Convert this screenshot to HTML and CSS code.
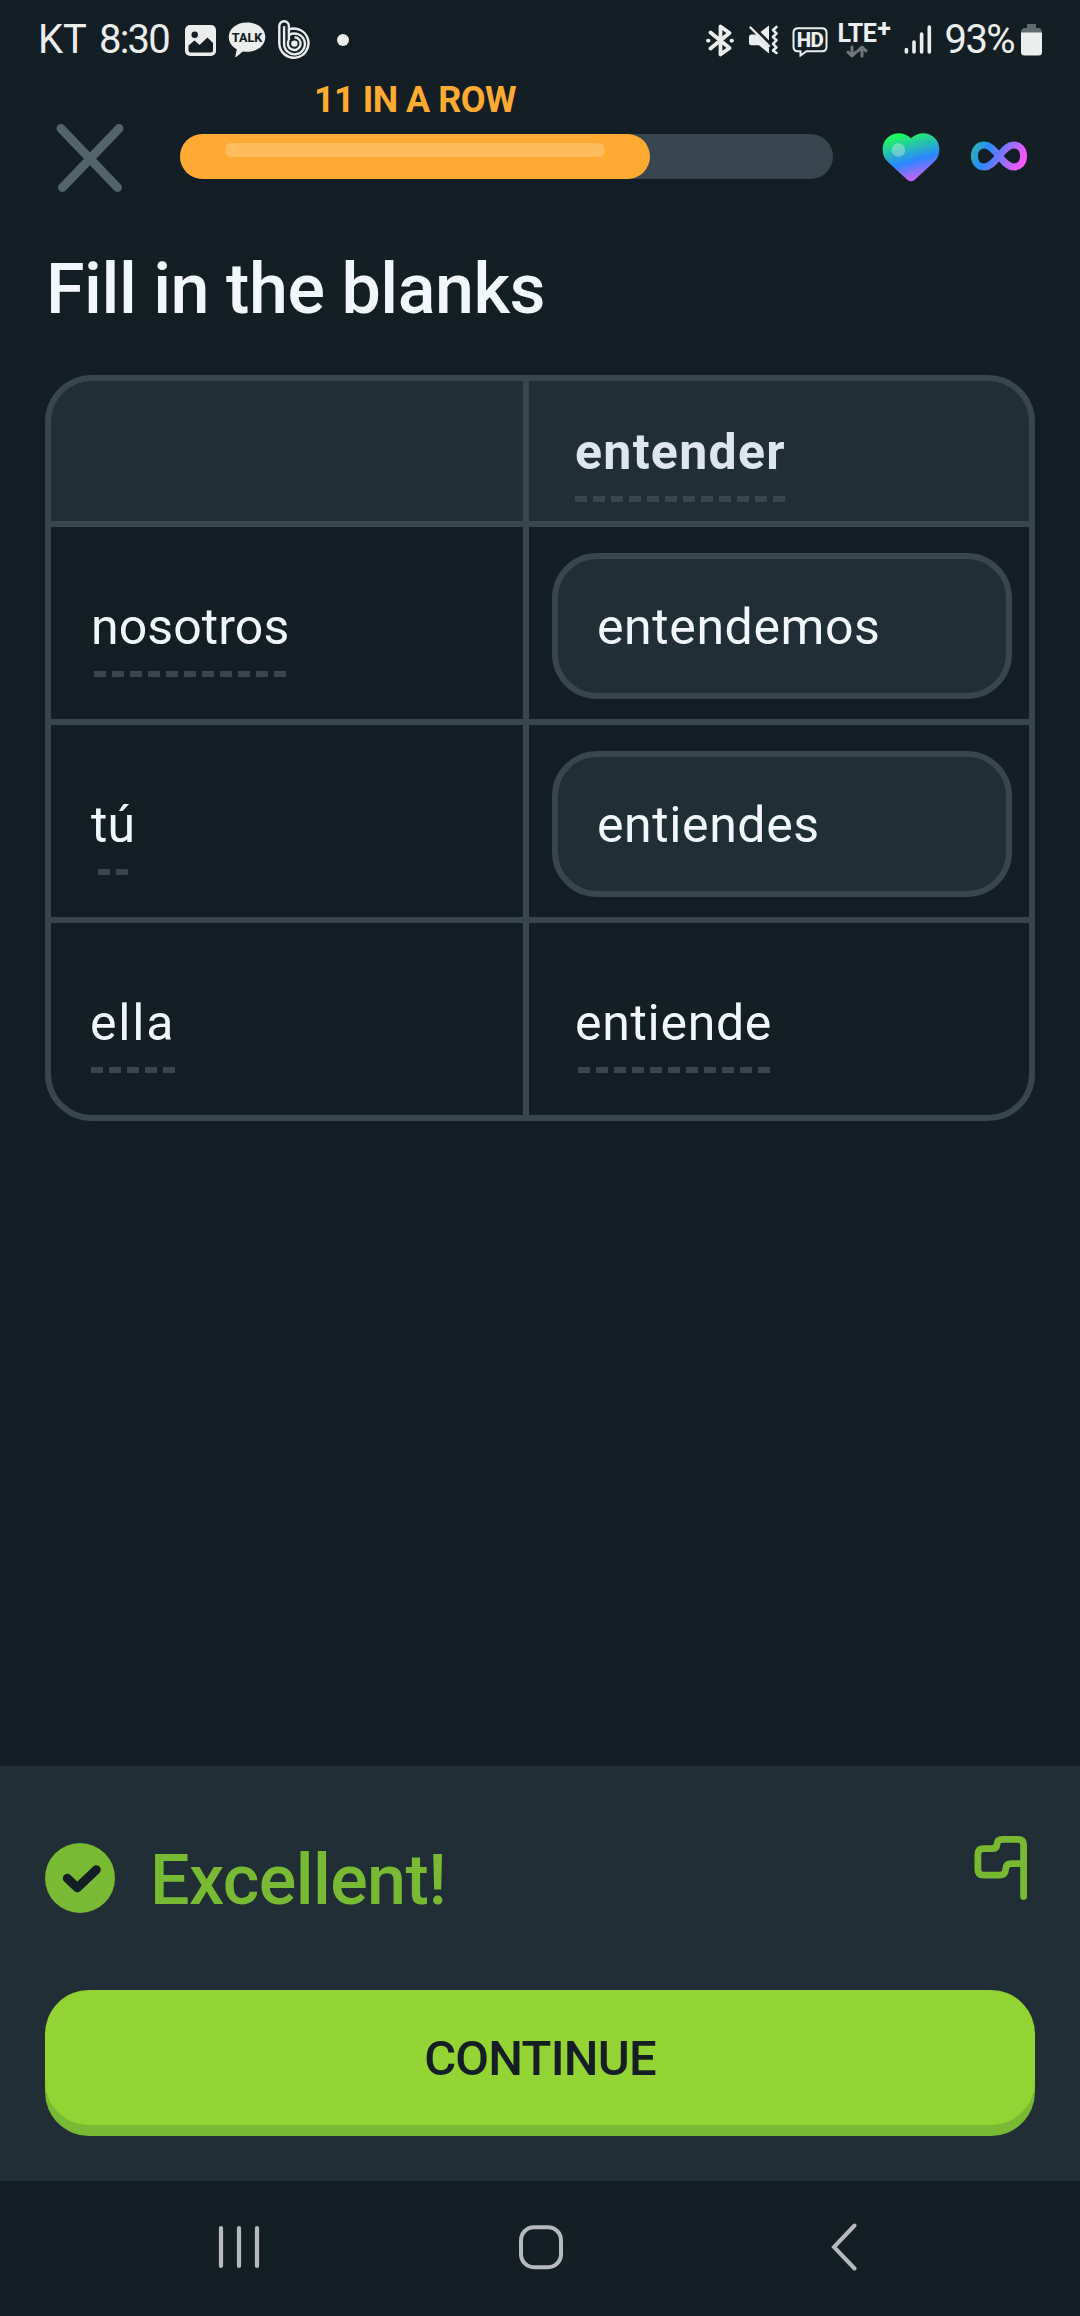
FILE: index.html
```html
<!DOCTYPE html>
<html lang="es">
<head>
    <meta charset="UTF-8">
    <meta name="viewport" content="width=device-width, initial-scale=1.0">
    <title>Fill in the blanks</title>
    <link rel="stylesheet" href="styles.css">
</head>
<body>
    <div class="status-bar">
        <div class="status-left">
            <span class="carrier">KT</span>
            <span class="clock">8:30</span>
            <svg class="icon-image" width="31" height="31" viewBox="0 0 31 31">
                <rect width="31" height="31" rx="5" fill="#eceeed"/>
                <circle cx="9.7" cy="9.7" r="3.2" fill="#131f24"/>
                <path d="M3.5 20.5 L9.5 15.5 L14.5 20 L22.5 12.5 L28 18 V25.5 Q28 27.5 26 27.5 H5.5 Q3.5 27.5 3.5 25.5 Z" fill="#131f24"/>
            </svg>
            <svg class="icon-talk" width="38" height="36" viewBox="0 0 38 36">
                <path d="M19 .5 C29.5 .5 37.3 6.8 37.3 15 C37.3 23.4 29.5 29.8 19 29.8 C17.5 29.8 16 29.7 14.8 29.4 L8.2 35 C7.5 35.3 7.2 35 7.4 34.3 L8.8 27.3 C3.8 24.7 .8 20.2 .8 15 C.8 6.8 8.5 .5 19 .5 Z" fill="#eceeed"/>
                <text x="19" y="20" class="talk-text">TALK</text>
            </svg>
            <svg class="icon-b" width="32" height="40" viewBox="0 0 32 40" fill="none" stroke="#eceeed" stroke-width="2.4">
                <path d="M1.3 23.5 V6 A4.8 4.8 0 0 1 10.9 6 V9.4 A14.6 14.6 0 1 1 1.3 23.5 Z"/>
                <path d="M6.1 24 V6.2 M6.1 23.5 A10.4 10.4 0 1 0 11.5 14.8"/>
                <path d="M10.9 10 V20 M10.9 20 A6.4 6.4 0 1 0 16.5 17.2" />
                <circle cx="16.4" cy="23.6" r="3.2" fill="#eceeed" stroke="none"/>
            </svg>
            <span class="more-dot"></span>
        </div>
        <div class="status-right">
            <svg width="28" height="33" viewBox="0 0 28 33" fill="none" stroke="#eceeed" stroke-width="3.8" stroke-linecap="round" stroke-linejoin="round">
                <path d="M4.5 8.5 L23.5 24 L14.5 30.5 V2.5 L23.5 9 L4.5 24.5"/>
                <path d="M2 16.6 H2.6 M25.4 16.6 H26"/>
            </svg>
            <svg class="icon-mute" width="32" height="30" viewBox="0 0 32 30">
                <path d="M1 12 Q1 9.5 3.5 9.5 H8.2 L21 22.5 V28.5 L11 20.3 H3.5 Q1 20.3 1 17.8 Z" fill="#eceeed"/>
                <path d="M12.5 7 L21 .5 V15.5 Z" fill="#eceeed"/>
                <path d="M2.5 2.5 L21 21" stroke="#eceeed" stroke-width="2.4" stroke-linecap="round"/>
                <path d="M28.5 2 L25 5 L28.5 8.5 L25 12 L28.5 15.3 L25 18.8 L28.5 22.3 L25 25.5 L28.5 28" fill="none" stroke="#eceeed" stroke-width="2.6" stroke-linecap="round" stroke-linejoin="round"/>
            </svg>
            <svg class="icon-hd" width="36" height="30" viewBox="0 0 36 30">
                <path d="M6 1.3 H30 Q34.5 1.3 34.5 5.8 V19.7 Q34.5 24.2 30 24.2 H14.5 L8.5 28.5 V24.2 H6 Q1.5 24.2 1.5 19.7 V5.8 Q1.5 1.3 6 1.3 Z" fill="none" stroke="#eceeed" stroke-width="2"/>
                <text x="18" y="20.2" class="hd-text">HD</text>
            </svg>
            <div class="network">
                <span class="network-name">LTE<sup>+</sup></span>
                <svg width="22" height="13" viewBox="0 0 22 13" fill="none" stroke="#70787b" stroke-width="3" stroke-linecap="round" stroke-linejoin="round">
                    <path d="M6 2 V10.5 M2 7.2 L6 11 L10 7.2"/>
                    <path d="M16 11 V2.5 M12 5.8 L16 2 L20 5.8"/>
                </svg>
            </div>
            <svg class="icon-signal" width="28" height="30" viewBox="0 0 28 30" stroke="#eceeed" stroke-width="3.6" stroke-linecap="round">
                <path d="M2.4 24.5 V27 M10 17 V27 M17.6 9 V27 M25.3 2 V27"/>
            </svg>
            <span class="battery-text">93%</span>
            <svg class="icon-battery" width="21" height="32" viewBox="0 0 21 32">
                <path d="M6 0 H15 V4 H17 Q21 4 21 9 H0 Q0 4 4 4 H6 Z" fill="#626b6e"/>
                <path d="M0 8.5 H21 V28 Q21 31.5 17.5 31.5 H3.5 Q0 31.5 0 28 Z" fill="#eceeed"/>
            </svg>
        </div>
    </div>

    <div class="lesson-header">
        <svg class="close" width="68" height="68" viewBox="0 0 68 68" stroke="#52656d" stroke-width="9" stroke-linecap="round">
            <path d="M5 4.5 L61.5 63.5 M63 4.5 L6.5 63.5"/>
        </svg>
        <div class="progress-area">
            <div class="streak">11 IN A ROW</div>
            <div class="progress">
                <div class="progress-fill"><div class="progress-shine"></div></div>
            </div>
        </div>
        <svg class="heart" width="58" height="49" viewBox="0 0 58 49">
            <defs>
                <linearGradient id="heartFill" gradientUnits="userSpaceOnUse" x1="18" y1="2" x2="31" y2="50">
                    <stop offset="0" stop-color="#20fa60"/>
                    <stop offset="0.57" stop-color="#2b86ff"/>
                    <stop offset="1" stop-color="#de5cf8"/>
                </linearGradient>
            </defs>
            <path d="M29 5.3 C25 1.8 21 .3 17 .3 C7.5 .3 .6 7.5 .6 16.5 C.6 21.5 2.6 26 6 29 L25.5 47 Q29 49.5 32.5 47 L52 29 C55.4 26 57.4 21.5 57.4 16.5 C57.4 7.5 50.5 .3 41 .3 C37 .3 33 1.8 29 5.3 Z" fill="url(#heartFill)"/>
            <circle cx="16.4" cy="17" r="6.8" fill="#fff" fill-opacity="0.3"/>
        </svg>
        <svg class="infinity" width="56" height="30" viewBox="0 0 56 30">
            <defs>
                <linearGradient id="infinityFill" gradientUnits="userSpaceOnUse" x1="2" y1="2" x2="52" y2="24">
                    <stop offset="0" stop-color="#2bb8a8"/>
                    <stop offset="0.3" stop-color="#2b88ff"/>
                    <stop offset="1" stop-color="#ff55ff"/>
                </linearGradient>
            </defs>
            <path d="M28 15 C21.5 7 18 4 13.3 4 C7.3 4 3.5 8.4 3.5 15 S7.3 26 13.3 26 C18 26 21.5 23 28 15 C34.5 7 38 4 42.7 4 C48.7 4 52.5 8.4 52.5 15 S48.7 26 42.7 26 C38 26 34.5 23 28 15 Z" fill="none" stroke="url(#infinityFill)" stroke-width="7"/>
        </svg>
    </div>

    <div class="challenge">
        <h1>Fill in the blanks</h1>
        <div class="verb-table">
            <div class="cell head"></div>
            <div class="cell head">
                <div class="word bold">entender<span class="dashes" style="--count: 12"></span></div>
            </div>
            <div class="cell">
                <div class="word snug">nosotros<span class="dashes" style="--count: 11"></span></div>
            </div>
            <div class="cell blank"><div class="answer">entendemos</div></div>
            <div class="cell">
                <div class="word snug">tú<span class="dashes" style="--count: 2"></span></div>
            </div>
            <div class="cell blank"><div class="answer">entiendes</div></div>
            <div class="cell">
                <div class="word wide">ella<span class="dashes" style="--count: 5"></span></div>
            </div>
            <div class="cell">
                <div class="word">entiende<span class="dashes" style="--count: 11"></span></div>
            </div>
        </div>
    </div>

    <div class="feedback">
        <div class="feedback-row">
            <svg width="70" height="70" viewBox="0 0 70 70">
                <circle cx="35" cy="35" r="35" fill="#79b933"/>
                <path d="M22.3 35.3 L32.3 44.7 L51.3 26.7" fill="none" stroke="#131f24" stroke-width="9" stroke-linecap="round" stroke-linejoin="round"/>
            </svg>
            <span class="feedback-text">Excellent!</span>
            <svg class="flag" width="54" height="64" viewBox="0 0 54 64" fill="none" stroke="#79b933" stroke-width="6.8" stroke-linecap="round">
                <path d="M49.6 60.5 V9 Q49.6 3.4 44 3.4 H28.5 Q23.2 3.4 23 8 Q22.8 12.7 18 12.7 H9.5 Q3.9 12.7 3.9 18.3 V33.5 Q3.9 39.1 9.5 39.1 H26 Q31.4 39.1 31.6 33.5 Q31.8 27.6 37.5 27.6 H49"/>
            </svg>
        </div>
        <button class="continue">CONTINUE</button>
    </div>

    <div class="nav-bar">
        <svg width="42" height="46" viewBox="0 0 42 46" stroke="#b7babc" stroke-width="4.2" stroke-linecap="round">
            <path d="M3 4 V42 M21 4 V42 M39 4 V42"/>
        </svg>
        <svg class="home" width="46" height="46" viewBox="0 0 46 46">
            <rect x="3" y="3.2" width="40" height="40" rx="13" fill="none" stroke="#b7babc" stroke-width="4"/>
        </svg>
        <svg width="28" height="48" viewBox="0 0 28 48" fill="none" stroke="#b7babc" stroke-width="4" stroke-linecap="round">
            <path d="M24.5 2.5 L4 24 L24.5 45.5"/>
        </svg>
    </div>
</body>
</html>
```
FILE: styles.css
```css
* {
    box-sizing: border-box;
}

body {
    margin: 0;
    width: 1080px;
    height: 2316px;
    display: flex;
    flex-direction: column;
    background-color: #131f24;
    color: #f1f7fb;
    font-family: Roboto, "Liberation Sans", sans-serif;
}

svg {
    display: block;
    flex: none;
}

/* Status bar */
.status-bar {
    height: 80px;
    display: flex;
    justify-content: space-between;
    padding: 0 38px;
    color: #eceeed;
    font-size: 40px;
    line-height: 82px;
}

.status-left,
.status-right {
    display: flex;
    align-items: center;
}

.carrier {
    width: 61px;
}

.clock {
    width: 86px;
    letter-spacing: -1.8px;
}

.icon-talk {
    margin-left: 12px;
}

.icon-b {
    margin-left: 12px;
}

.more-dot {
    width: 12px;
    height: 12px;
    margin-left: 27px;
    border-radius: 50%;
    background-color: #eceeed;
}

.talk-text {
    font-size: 12.5px;
    font-weight: 800;
    text-anchor: middle;
    fill: #131f24;
}

.hd-text {
    font-size: 20.5px;
    font-weight: 800;
    letter-spacing: -0.5px;
    text-anchor: middle;
    fill: #eceeed;
}

.icon-mute {
    margin-left: 14px;
}

.icon-hd {
    margin: 3px 0 0 12px;
}

.network {
    width: 56px;
    height: 36px;
    margin-left: 10px;
}

.network-name {
    display: flex;
    height: 23px;
    font-size: 25px;
    font-weight: 700;
    line-height: 23px;
    letter-spacing: -0.5px;
}

.network-name sup {
    margin-left: 1px;
    font-size: 25px;
    line-height: 14px;
}

.network svg {
    margin-left: 8px;
}

.icon-signal {
    margin-left: 10px;
}

.battery-text {
    margin-left: 13px;
    letter-spacing: -1.6px;
}

.icon-battery {
    margin-left: 7px;
}

/* Lesson header */
.lesson-header {
    height: 169px;
    display: flex;
    align-items: flex-start;
    padding-left: 56px;
}

.close {
    margin-top: 44px;
}

.progress-area {
    width: 653px;
    margin-left: 56px;
}

.streak {
    width: 470px;
    height: 54px;
    color: #ffab33;
    font-size: 36px;
    font-weight: 700;
    line-height: 40px;
    letter-spacing: -0.5px;
    text-align: center;
}

.progress {
    height: 45px;
    border-radius: 23px;
    background-color: #37464f;
}

.progress-fill {
    width: 470px;
    height: 45px;
    padding: 9px 45px;
    border-radius: 23px;
    background-color: #ffab33;
}

.progress-shine {
    height: 14px;
    border-radius: 7px;
    background-color: #ffbc5c;
}

.heart {
    margin: 53px 0 0 49px;
}

.infinity {
    margin: 61px 0 0 31px;
}

/* Challenge */
.challenge {
    flex: 1;
    padding: 0 45px;
}

h1 {
    margin: 0 0 46px;
    padding-left: 1px;
    font-size: 70px;
    font-weight: 500;
    line-height: 80px;
    letter-spacing: -0.45px;
}

.verb-table {
    display: grid;
    grid-template-columns: 472px 500px;
    grid-template-rows: 140px 192px 192px 192px;
    gap: 6px;
    width: 990px;
    border: 6px solid #37464f;
    border-radius: 47px;
    background-color: #37464f;
    overflow: hidden;
}

.cell {
    padding: 70px 0 0 40px;
    background-color: #131f24;
}

.cell.head {
    padding-top: 41px;
    background-color: #202f36;
}

.cell:nth-child(even) {
    padding-left: 46px;
}

.cell.blank:nth-child(even) {
    padding: 26px 17px 20px 23px;
}

.word {
    display: inline-flex;
    flex-direction: column;
    align-items: center;
    font-size: 50px;
    line-height: 60px;
    letter-spacing: 0.7px;
}

.word.bold {
    color: #dce6ec;
    font-weight: 700;
    letter-spacing: 1.3px;
}

.word.snug {
    letter-spacing: 0.1px;
}

.word.wide {
    margin-left: -1px;
    letter-spacing: 1.8px;
}

.dashes {
    width: calc(var(--count) * 18px - 6px);
    height: 6px;
    margin-top: 14px;
    background: repeating-linear-gradient(to right, #37464f 0 12px, transparent 12px 18px);
}

.answer {
    height: 146px;
    padding: 2px 0 0 39px;
    border: 6px solid #37464f;
    border-radius: 45px;
    background-color: #202f36;
    font-size: 50px;
    line-height: 132px;
    letter-spacing: 0.6px;
}

/* Feedback */
.feedback {
    height: 415px;
    padding: 77px 45px 0;
    background-color: #202f36;
}

.feedback-row {
    height: 70px;
    display: flex;
    align-items: center;
}

.feedback-text {
    margin-left: 35px;
    padding-top: 3px;
    color: #79b933;
    font-size: 70px;
    font-weight: 500;
    letter-spacing: -0.6px;
}

.flag {
    margin: 0 7px 20px auto;
}

.continue {
    display: block;
    width: 100%;
    height: 135px;
    margin-top: 77px;
    padding: 0;
    border: none;
    border-radius: 44px;
    background-color: #93d333;
    box-shadow: 0 11px #79b933;
    color: #131f24;
    font: 500 49px/137px Roboto, "Liberation Sans", sans-serif;
    letter-spacing: -0.8px;
}

/* Android navigation */
.nav-bar {
    height: 135px;
    display: flex;
    align-items: center;
    justify-content: space-between;
    padding: 0 222px 3px 218px;
}

.home {
    margin-right: 8px;
}
```
